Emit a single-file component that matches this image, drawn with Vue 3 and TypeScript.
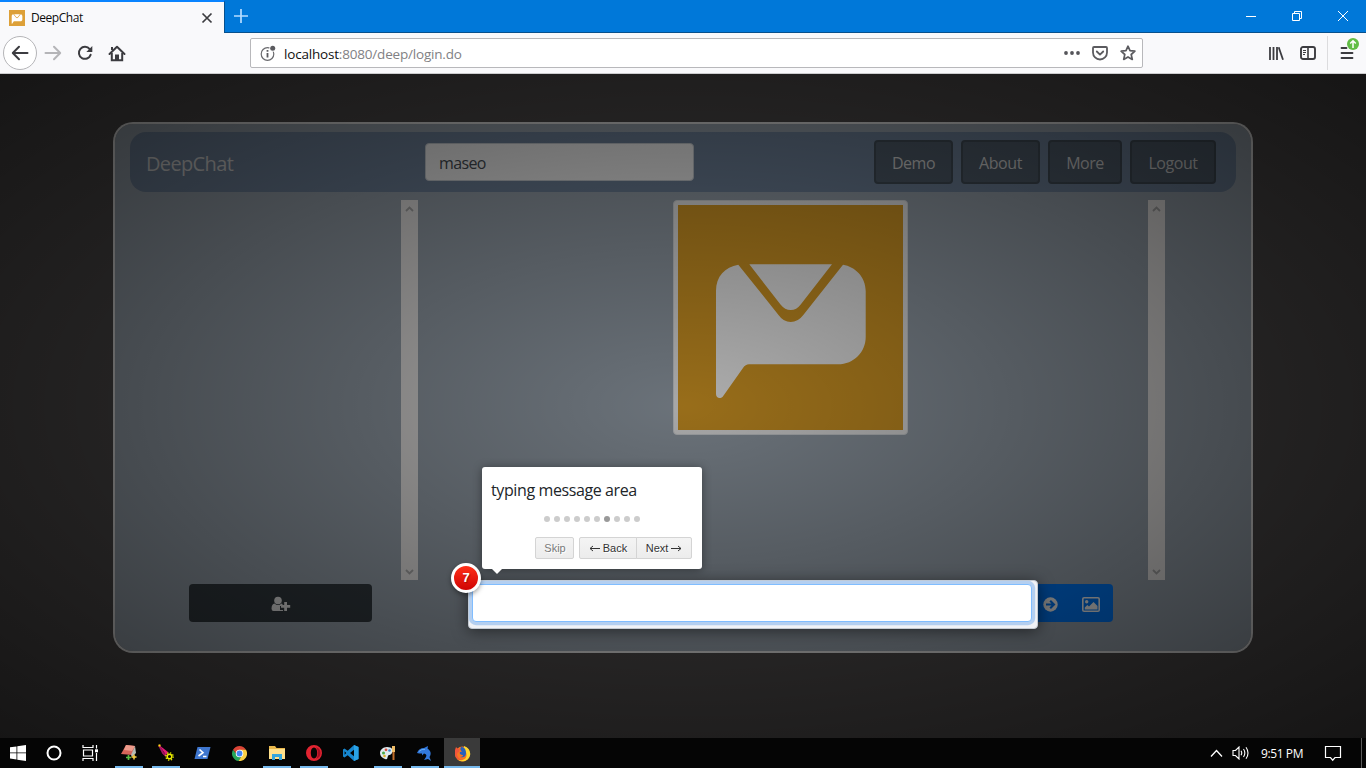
<script setup lang="ts">
import { ref } from 'vue'

const username = ref('maseo')
const message = ref('')
const navItems = [
  { label: 'Demo', width: 79 },
  { label: 'About', width: 79 },
  { label: 'More', width: 74 },
  { label: 'Logout', width: 86 },
]
const steps = 10
const current = ref(7)
const body =
  'M60.3 59.7C47 62 38 71 38 86V189C38 193.500 42.500 194 44.700 191.700L65 163Q67.500 159.300 71 159.300H160C176 159.300 187.700 147 187.700 132V86C187.700 72 177 61.500 165 59.700L125.300 110Q120 117 112.700 117T100.500 110Z'
const flap = 'M71.300 59.300H154L122.700 99.500Q118.500 105 112.700 105T102.500 99.500Z'
</script>

<template>
  <div class="desktop">
    <div class="tabs">
      <div class="tab">
        <svg class="fav" viewBox="0 0 225 225"><rect width="225" height="225" fill="#dda038" /><path :d="body" fill="#fff" /><path :d="flap" fill="#fff" /></svg>
        <span class="tab-title">DeepChat</span>
        <svg class="tab-close" width="12" height="12" viewBox="0 0 12 12"><path d="M1.500 1.500l9 9m0-9l-9 9" stroke="#3c3c40" stroke-width="1.700" /></svg>
      </div>
      <svg class="plus" width="14" height="14" viewBox="0 0 14 14"><path d="M7 0v14M0 7h14" stroke="#b5dcff" stroke-width="1.700" /></svg>
      <div class="winctl">
        <svg width="12" height="12"><path d="M1 6.500h10" stroke="#fff" /></svg>
        <svg width="12" height="12" fill="none" stroke="#fff"><path d="M1.500 3.500h7v7h-7zM3.500 3.500v-2h7v7h-2" /></svg>
        <svg width="12" height="12"><path d="M1 1l10 10M11 1L1 11" stroke="#fff" /></svg>
      </div>
    </div>

    <div class="toolbar">
      <div class="back"><svg width="18" height="16" viewBox="0 0 18 16" fill="none" stroke="#3c3c40" stroke-width="2"><path d="M16.500 8H2M8 1.800L1.800 8L8 14.200" stroke-linecap="round" stroke-linejoin="round" /></svg></div>
      <svg class="fwd" width="18" height="16" viewBox="0 0 18 16" fill="none" stroke="#b5b5b8" stroke-width="2"><path d="M1.500 8H16M10 1.800L16.200 8L10 14.200" stroke-linecap="round" stroke-linejoin="round" /></svg>
      <svg class="reload" width="16" height="16" viewBox="0 0 16 16"><path d="M12.700 4.200A6 6 0 1 0 13.600 9.800" fill="none" stroke="#3c3c40" stroke-width="2" stroke-linecap="round" /><path d="M15.300 1v6H9.300z" fill="#3c3c40" /></svg>
      <svg class="home" width="18" height="17" viewBox="0 0 18 17"><path d="M1.500 9L9 1.800L16.500 9" fill="none" stroke="#3c3c40" stroke-width="2" stroke-linecap="round" stroke-linejoin="round" /><path d="M3.800 8v7.200h10.400V8" fill="none" stroke="#3c3c40" stroke-width="2" /><path d="M7 15V9.500h4V15z" fill="#3c3c40" /><path d="M4 2v3" stroke="#3c3c40" stroke-width="2" /></svg>
      <div class="url">
        <svg class="info" width="17" height="17" viewBox="0 0 17 17"><circle cx="7.500" cy="9" r="6.300" fill="none" stroke="#6a6a6e" stroke-width="1.200" /><path d="M7.500 8v4.500M7.500 5v1.700" stroke="#5b5b5f" stroke-width="1.800" /><circle cx="12.700" cy="3.300" r="3.400" fill="#fff" /><circle cx="12.700" cy="3.300" r="2.500" fill="#5b5b5f" /></svg>
        <span class="addr"><b>localhost</b>:8080/deep/login.do</span>
        <svg class="dots3" width="16" height="4"><g fill="#55555a"><circle cx="2" cy="2" r="1.900" /><circle cx="8" cy="2" r="1.900" /><circle cx="14" cy="2" r="1.900" /></g></svg>
        <svg class="pocket" width="16" height="15" viewBox="0 0 16 15" fill="none" stroke="#5b5b5f" stroke-width="1.800"><path d="M2 1h12q1 0 1 1v4.500a7 7 0 0 1-14 0V2q0-1 1-1z" /><path d="M4.800 5.500L8 8.600l3.200-3.100" stroke-linecap="round" stroke-linejoin="round" /></svg>
        <svg class="star" width="16" height="16" viewBox="0 0 16 16"><path d="M8 1.200l2 4.500 4.900.5-3.700 3.300 1.100 4.900L8 11.900l-4.300 2.500 1.100-4.900L1.100 6.200 6 5.700z" fill="none" stroke="#5b5b5f" stroke-width="1.700" stroke-linejoin="round" /></svg>
      </div>
      <svg class="library" width="16" height="15" viewBox="0 0 16 15"><path d="M2 1v13M5.500 1v13M9 1v13" stroke="#3c3c40" stroke-width="1.800" /><path d="M10.700 1.200l4.300 12.500" stroke="#3c3c40" stroke-width="1.800" /></svg>
      <svg class="sidebar" width="16" height="14" viewBox="0 0 16 14" fill="none" stroke="#3c3c40"><rect x="1" y="1" width="14" height="12" rx="2" stroke-width="1.900" /><path d="M8 1v12" stroke-width="1.600" /><path d="M3 4.500h3M3 6.500h3M3 8.500h2" /></svg>
      <div class="menu">
        <svg width="19" height="24" viewBox="0 0 19 24"><path d="M1.500 12h5M1.500 17h11M1.500 22h11" stroke="#3c3c40" stroke-width="1.800" stroke-linecap="round" /><circle cx="13" cy="8" r="6" fill="#61bd45" /><path d="M13 12V5M10.200 7.500L13 4.700l2.800 2.800" fill="none" stroke="#fff" stroke-width="1.500" /></svg>
      </div>
    </div>

    <main class="page">
      <section class="card">
        <header class="head">
          <span class="brand">DeepChat</span>
          <input v-model="username" class="search" type="text" />
          <nav>
            <button v-for="n in navItems" :key="n.label" :style="{ width: n.width + 'px' }">{{ n.label }}</button>
          </nav>
        </header>
        <div class="panes">
          <div class="pane users">
            <div class="scroll"><svg width="9" height="6"><path d="M1 5l3.500-3.500L8 5" /></svg><svg width="9" height="6"><path d="M1 1l3.500 3.500L8 1" /></svg></div>
          </div>
          <div class="pane chat">
            <div class="thumb"><svg viewBox="0 0 225 225" width="225" height="225"><rect width="225" height="225" fill="#e0a126" /><path :d="body" fill="#fff" /><path :d="flap" fill="#fff" /></svg></div>
            <div class="scroll"><svg width="9" height="6"><path d="M1 5l3.500-3.500L8 5" /></svg><svg width="9" height="6"><path d="M1 1l3.500 3.500L8 1" /></svg></div>
          </div>
        </div>
        <footer class="foot">
          <button class="add">
            <svg width="20" height="16" viewBox="0 0 20 16" fill="#f5f5f5"><circle cx="7" cy="4.500" r="3.800" /><path d="M3.500 7.500Q7 10.500 10.500 7.500Q11 7.500 11.500 8v2H9v4h3v1H2.500Q.5 15 .5 12.500Q.7 8 3.500 7.500z" /><path d="M13.200 6h2.800v3h3.200v2.800H16v3.200h-2.800v-3.200H10V9h3.200z" /></svg>
          </button>
          <div class="actions">
            <svg width="15" height="15" viewBox="0 0 15 15"><circle cx="7.500" cy="7.500" r="7.200" fill="#fff" /><path d="M3 7.500h7.500M7.200 3.700L11 7.500l-3.800 3.800" fill="none" stroke="#007bff" stroke-width="2.100" /></svg>
            <svg width="18" height="15" viewBox="0 0 18 15"><rect x=".8" y=".8" width="16.400" height="13.400" rx="1.300" fill="none" stroke="#fff" stroke-width="1.600" /><circle cx="4.700" cy="4.700" r="1.700" fill="#fff" /><path d="M2.800 12.500V10.400l2.500-2.500 1.700 1.700 4.500-4.600 4 4v3.500z" fill="#fff" /></svg>
          </div>
        </footer>
      </section>

      <div class="overlay"></div>
      <div class="highlight"><input v-model="message" type="text" /></div>
      <div class="badge">{{ current }}</div>
      <div class="tip">
        <p>typing message area</p>
        <div class="bullets"><i v-for="s in steps" :key="s" :class="{ on: s === current }"></i></div>
        <div class="tip-btns">
          <button class="skip">Skip</button>
          <button class="prev"><svg width="11" height="7"><path d="M11 3.500H1M4 1L1 3.500L4 6" /></svg>Back</button>
          <button class="next">Next<svg width="11" height="7"><path d="M0 3.500h10M7 1l3 2.500L7 6" /></svg></button>
        </div>
      </div>
    </main>

    <div class="taskbar">
      <div class="task sys"><svg width="16" height="16" viewBox="0 0 16 16" fill="#fff"><path d="M0 2.300l6.500-.9v6.100H0zM7.300 1.300L16 0v7.500H7.300zM0 8.300h6.500v6.100L0 13.500zM7.300 8.300H16V16l-8.700-1.300z" /></svg></div>
      <div class="task sys"><svg width="16" height="16"><circle cx="8" cy="8" r="6.500" fill="none" stroke="#fff" stroke-width="2" /></svg></div>
      <div class="task sys"><svg width="17" height="16" viewBox="0 0 17 16" fill="none" stroke="#fff" stroke-width="1.200"><path d="M1 0v2.500h10V0M1 16v-2.500h10V16M1.500 5h9v6h-9zM14.500 0v3.500M14.500 8v8" /><path d="M13 4.300h3v3h-3z" fill="#fff" stroke="none" /></svg></div>
      <div class="task run"><svg width="18" height="18" viewBox="0 0 18 18"><path d="M6 1l9 1-3 9-11-1z" fill="#d7665a" /><path d="M6 1l9 1-3 5-8-1z" fill="#ed9b8b" /><path d="M15 2l1 7-4 4-1-2z" fill="#b7bcb5" /><path d="M6 13.500h5M8.500 11v5" stroke="#59bd42" stroke-width="1.700" /><path d="M11.500 13h5M14 10.500v5" stroke="#ffd344" stroke-width="1.500" /></svg></div>
      <div class="task run"><svg width="18" height="18" viewBox="0 0 18 18"><path d="M2 1l9 7-2 3z" fill="#e31b75" /><path d="M2 1l4 8 3 3" fill="none" stroke="#a51362" stroke-width="2" /><path d="M1.500 1.500h2" stroke="#ffe600" stroke-width="2" /><circle cx="12.500" cy="12.500" r="2.300" fill="none" stroke="#ecef00" stroke-width="1.500" /><circle cx="12.500" cy="12.500" r="3.700" fill="none" stroke="#ecef00" stroke-width="1.300" stroke-dasharray="1.400 1.506" /></svg></div>
      <div class="task"><svg width="17" height="14" viewBox="0 0 17 14"><path d="M3.500 1H16.500L13.500 13H.5z" fill="#3e76cf" /><path d="M5.500 3.500L9 6.700L4.500 10M9 10.500h3.500" fill="none" stroke="#fff" stroke-width="1.600" /></svg></div>
      <div class="task"><svg width="15" height="15" viewBox="0 0 16 16"><path d="M1.100 4A8 8 0 0 1 14.900 4L8 4.500 5 9z" fill="#db4437" /><path d="M1.100 4A8 8 0 0 0 7 16l4-6-6-1z" fill="#26a65b" /><path d="M14.900 4A8 8 0 0 1 7 16l4.300-7L8 4z" fill="#f9cf45" /><circle cx="8" cy="8" r="4" fill="#fff" /><circle cx="8" cy="8" r="3.100" fill="#4285f4" /></svg></div>
      <div class="task run"><svg width="18" height="16" viewBox="0 0 18 16"><path d="M1 1h6l1.500 2H17v11H1z" fill="#e9b84c" /><path d="M1 4h16v10H1z" fill="#ffe08b" /><path d="M4 15V9h10v6h-3v-3H7v3z" fill="#34a5dc" /></svg></div>
      <div class="task run"><svg width="16" height="16" viewBox="0 0 16 16"><path fill-rule="evenodd" d="M8 0a8 8 0 1 0 0 16A8 8 0 0 0 8 0m0 2.500c2 0 3.200 2.400 3.200 5.500S10 13.500 8 13.500 4.800 11.100 4.800 8 6 2.500 8 2.500z" fill="#e22431" /><path d="M10 2.200a6 6 0 0 1 0 11.600c2.500-2.500 2.500-9 0-11.600z" fill="#a50d22" /></svg></div>
      <div class="task"><svg width="17" height="16" viewBox="0 0 17 16"><path fill-rule="evenodd" d="M12 0l4.500 2v12L12 16 5.700 10.200 2.500 12.500 1 11.500V4.500L2.500 3.500 5.700 5.800zM12 4.700L8 8l4 3.300zM2.600 6.300v3.400L4.300 8z" fill="#1686cf" /><path d="M12 0l4.500 2v12L12 16z" fill="#2aa3e6" /></svg></div>
      <div class="task run"><svg width="18" height="16" viewBox="0 0 18 16"><path d="M8 2c5 0 7 3 5 6s-3 1-4 3 0 4-3 3-5-3-5-6 3-6 7-6z" fill="#dce9ee" /><circle cx="4.500" cy="8" r="1.500" fill="#47a947" /><circle cx="7" cy="4.800" r="1.400" fill="#d74c3b" /><circle cx="10.500" cy="5.500" r="1.300" fill="#3788cf" /><circle cx="5.500" cy="11" r="1.300" fill="#e1ad28" /><path d="M14.500 1v6" stroke="#f0bd67" stroke-width="3" /><path d="M14.500 7v8" stroke="#c16c28" stroke-width="2" /></svg></div>
      <div class="task run"><svg width="17" height="17" viewBox="0 0 17 17"><path d="M1 8Q3 3 8 3l4-2-.5 2.500C15 6 15.500 9 13.500 12l1.500 4-3-2-4 1 2-3c1-2 0-3-2-3.500L6 10.500V8.500Q3 8.500 1 8z" fill="#3279dd" /><path d="M3 6.500Q6 3.500 9 4.500" stroke="#65acf4" fill="none" /></svg></div>
      <div class="task run active"><svg width="17" height="17" viewBox="0 0 17 17"><circle cx="8.500" cy="9" r="7.500" fill="#f87523" /><path d="M10 1q6 2 6.300 8c-1 7-8 9-12 6 7 1 9-3 8-7-.5-2-3-3-2.300-7z" fill="#ffd72e" /><path d="M1 5l1-3 2 2 2-.5L5 7Q3 7 3 10q1 4 5 5-6 0-7-5z" fill="#f2553a" /><path d="M7 2c3 0 5 2 5 6s-3 5-6 4c2 0 3-1 3-2-2 0-4-1-3-3l2-.5C6 5 6 4 7 2z" fill="#2861bb" /></svg></div>
      <div class="tray">
        <svg width="13" height="9" fill="none" stroke="#fff" stroke-width="1.300"><path d="M1 7.500l5.500-6 5.500 6" /></svg>
        <svg class="vol" width="18" height="14" viewBox="0 0 18 14" fill="none" stroke="#fff" stroke-width="1.100"><path d="M1 4.500h2.500L7 1v12L3.500 9.500H1zM9 4.700q1.500 2.300 0 4.600M11.500 3q2.700 4 0 8M14 1.200q4 5.800 0 11.600" /></svg>
        <span class="time">9:51 PM</span>
        <svg class="note" width="18" height="17" viewBox="0 0 18 17" fill="none" stroke="#fff" stroke-width="1.200"><path d="M1.500 1.500h15v11H11l-2.300 2.700-2.200-2.700h-5z" /></svg>
        <div class="peek"></div>
      </div>
    </div>
  </div>
</template>

<style>
html, body { margin: 0; overflow: hidden; }
</style>

<style scoped>
* { box-sizing: border-box; }
svg { display: block; flex: none; }
button, input { font: inherit; padding: 0; margin: 0; outline: none; }
.desktop { width: 1366px; height: 768px; display: flex; flex-direction: column; font-family: "Open Sans", "Noto Sans", sans-serif; background: #050505; overflow: hidden; }
.tabs { height: 33px; flex: none; background: #0078d9; border-bottom: 1px solid #07508d; display: flex; align-items: center; }
.tab { width: 225px; height: 33px; align-self: flex-start; background: #f9f9fb; border-top: 2px solid #0a84ff; border-right: 1px solid #07508d; display: flex; align-items: center; padding: 0 11px 0 9px; }
.fav { width: 16px; height: 16px; margin-right: 6px; }
.tab-title { font-size: 12px; letter-spacing: -.45px; color: #0c0c0d; flex: 1; line-height: 30px; }
.plus { margin-left: 9px; }
.winctl { margin-left: auto; display: flex; gap: 34px; padding-right: 17px; }
.toolbar { height: 41px; flex: none; background: #f9f9fb; border-bottom: 1px solid #ccccce; display: flex; align-items: center; padding-left: 3px; }
.back { width: 34px; height: 34px; border: 1px solid #b5b5b8; border-radius: 50%; background: #fff; display: flex; align-items: center; justify-content: center; }
.fwd { margin-left: 7px; }
.reload { margin-left: 15px; }
.home { margin-left: 15px; }
.url { margin-left: 124px; width: 893px; height: 30px; border: 1px solid #b8b8bb; border-radius: 2px; background: #fff; display: flex; align-items: center; padding: 0 6px 0 9px; }
.addr { margin-left: 7px; font-size: 13.5px; letter-spacing: -.19px; color: #818184; flex: 1; line-height: 28px; padding-top: 1px; }
.addr b { font-weight: 400; color: #111; }
.pocket { margin-left: 12px; }
.star { margin-left: 12px; }
.library { margin-left: 125px; }
.sidebar { margin-left: 16px; }
.menu { margin-left: 11px; height: 34px; border-left: 1px solid #dcdcde; padding-left: 12px; }

.page { position: relative; height: 664px; flex: none; background: #4f4c4c; padding: 48px 113px 0; }
.card { width: 1140px; height: 531px; border: 2px solid rgba(255,255,255,.88); background-clip: padding-box; border-radius: 20px; background-color: #9da8b3; padding: 8px 15px; }
.head { height: 60px; background: #7387a0; border-radius: 16px; display: flex; align-items: center; padding: 0 20px 0 16px; }
.brand { font-size: 20px; letter-spacing: -.65px; color: #dedede; width: 279px; line-height: 30px; padding-top: 3px; }
.search { width: 269px; height: 38px; border: 1px solid #ced4da; border-radius: 4px; background: #fff; padding: 2px 12px 0 13px; font-size: 16px; color: #495057; letter-spacing: -.65px; }
nav { margin-left: auto; display: flex; gap: 8px; }
nav button { height: 44px; border: 2px solid #44505b; border-radius: 4px; background: #536170; color: #dcdcdc; font-size: 16px; letter-spacing: -.45px; padding-top: 2px; }
.panes { margin-top: 8px; height: 380px; display: flex; }
.pane { display: flex; justify-content: flex-end; }
.users { width: 288px; }
.chat { width: 747px; }
.scroll { width: 17px; background: #f1efee; display: flex; flex-direction: column; justify-content: space-between; align-items: center; padding: 6px 0 5px; }
.scroll path { fill: none; stroke: #b0b0b0; stroke-width: 1.8; }
.thumb { width: 235px; height: 235px; border: 1px solid #dee2e6; border-radius: 4px; padding: 4px; background: #f7f7f7; margin-right: 240px; }
.foot { margin-top: 4px; height: 38px; display: flex; justify-content: space-between; padding: 0 123px 0 59px; }
.add { width: 183px; border: 0; border-radius: 4px; background: #343c42; display: flex; align-items: center; justify-content: center; padding-top: 2px; }
.actions { width: 90px; background: #007bff; border-radius: 4px; display: flex; justify-content: flex-end; align-items: center; gap: 24px; padding: 2px 13px 0 0; }

.overlay { position: absolute; inset: 0; opacity: .8; background: radial-gradient(ellipse farthest-corner at center, rgba(0,0,0,.4) 0, rgba(0,0,0,.9) 100%); }
.highlight { position: absolute; left: 468px; top: 506px; width: 570px; height: 49px; border: 1px solid #c3c9d1; border-radius: 4px; background: #f0f2f6; box-shadow: 0 2px 15px rgba(0,0,0,.5); padding: 3px; }
.highlight input { display: block; width: 560px; height: 38px; border: 1px solid #80bdff; border-radius: 4px; background: #fff; box-shadow: 0 0 0 3.2px #b4cff0; padding: 0 12px; }
.badge { position: absolute; left: 451px; top: 489px; width: 30px; height: 30px; border: 3px solid #fff; border-radius: 50%; background: linear-gradient(#ff3019, #cf0404); box-shadow: 0 2px 5px rgba(0,0,0,.4); color: #fff; font: bold 13px/24px "Liberation Sans", sans-serif; text-align: center; text-shadow: 1px 1px 1px rgba(0,0,0,.3); }
.tip { position: absolute; left: 482px; top: 393px; width: 220px; height: 102px; border-radius: 3px; background: #fff; box-shadow: 0 1px 10px rgba(0,0,0,.4); padding: 10px; }
.tip::after { content: ""; position: absolute; left: 10px; bottom: -5px; border: 5px solid transparent; border-bottom: 0; border-top-color: #fff; }
.tip p { margin: 0 0 0 -1px; font-size: 16px; line-height: 26px; letter-spacing: -.39px; color: #212529; white-space: nowrap; }
.bullets { margin-top: 13px; display: flex; justify-content: center; gap: 4px; height: 6px; }
.bullets i { width: 6px; height: 6px; border-radius: 50%; background: #ccc; }
.bullets i.on { background: #999; }
.tip-btns { margin-top: 15px; display: flex; justify-content: flex-end; font: 11px/20px "Liberation Sans", Arial, sans-serif; }
.tip-btns button { height: 22px; border: 1px solid #d4d4d4; background: linear-gradient(#f4f4f4, #ececec); color: #333; text-shadow: 1px 1px 0 #fff; display: flex; align-items: center; justify-content: center; gap: 3px; }
.tip-btns path { fill: none; stroke: #333; }
.tip-btns .skip { width: 39px; border-radius: 2px; margin-right: 5px; color: #7a7a7a; padding-left: 1px; }
.tip-btns .prev { width: 58px; border-radius: 2px 0 0 2px; }
.tip-btns .next { width: 56px; margin-left: -1px; border-radius: 0 2px 2px 0; }

.taskbar { height: 30px; flex: none; background: #050505; display: flex; }
.task { width: 37px; height: 30px; display: flex; align-items: center; justify-content: center; position: relative; }
.task.sys { width: 36px; }
.task.sys + .task:not(.sys) { margin-left: 2px; }
.run::after { content: ""; position: absolute; left: 5px; right: 4px; bottom: 0; height: 2px; background: #76b9ed; }
.run.active { background: #3a3a3a; width: 36px; margin-left: 1px; }
.active::after { left: 0; right: 0; }
.tray { margin-left: auto; display: flex; align-items: center; color: #fff; }
.vol { margin-left: 9px; }
.time { margin-left: 11px; font-size: 12px; letter-spacing: -.4px; width: 63px; white-space: nowrap; }
.note { margin-top: 1px; }
.peek { width: 5px; height: 30px; border-left: 1px solid #5a5a5a; margin-left: 19px; }
</style>
